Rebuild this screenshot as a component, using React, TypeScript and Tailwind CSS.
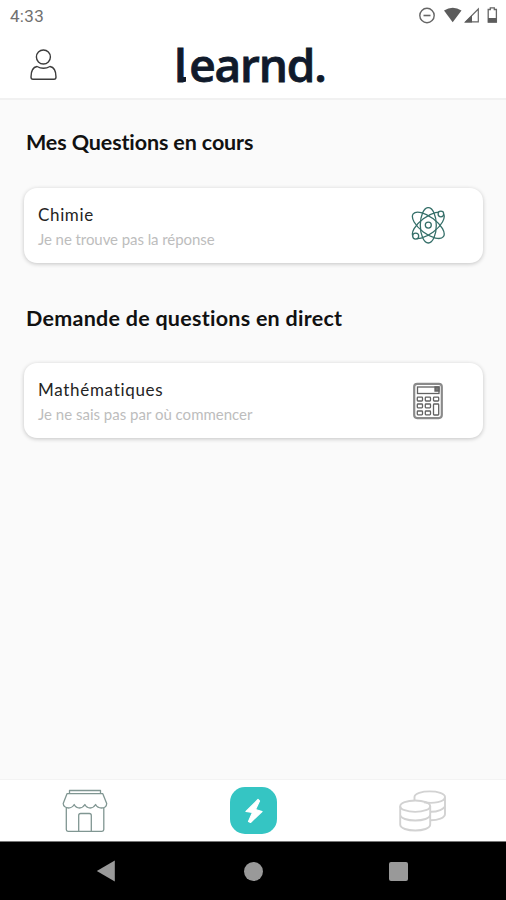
import React from 'react';

function StatusIcons() {
  return (
    <svg className="h-[20px] w-[82px]" viewBox="418 5 82 20" fill="none">
      <circle cx="427" cy="14.5" r="7.2" stroke="#666" strokeWidth="1.4" />
      <path d="M423.500 14.500h7" stroke="#666" strokeWidth="1.6" />
      <path d="M444 9.500Q452.700 4 461.500 9.500L452.700 21.300Z" fill="#5c5c5c" />
      <path d="M465.500 20.800L478.300 8V20.800Z" stroke="#666" strokeWidth="1.2" />
      <path d="M464.500 21.400L472 14V21.400Z" fill="#5c5c5c" />
      <path d="M488.200 8.500h2.100V6.800h4v1.700h2.100v12.700h-8.200Z" stroke="#666" strokeWidth="1.3" />
      <path d="M488 17h8.600v4.500H488Z" fill="#5c5c5c" />
    </svg>
  );
}

function UserIcon() {
  return (
    <svg className="h-[34px] w-[30px]" viewBox="28 48 30 34" fill="none" stroke="#3c3c3c" strokeWidth="1.4">
      <circle cx="43.400" cy="57" r="7" />
      <path d="M37 66.500Q43.500 70 50 66.500Q56 67.500 56 77Q56 79.200 54 79.200H33Q31 79.200 31 77Q31 67.500 37 66.500Z" strokeLinejoin="round" />
    </svg>
  );
}

function AtomIcon() {
  return (
    <svg className="h-[38px] w-[36px]" viewBox="410 206.500 36 38" fill="none" stroke="#356f69" strokeWidth="1.300">
      <ellipse cx="428.300" cy="224.800" rx="8" ry="17.700" />
      <ellipse cx="428.300" cy="224.800" rx="8.300" ry="18.900" transform="rotate(53 428.300 224.800)" />
      <ellipse cx="428.300" cy="224.800" rx="8.300" ry="18.900" transform="rotate(-53 428.300 224.800)" />
      <circle cx="428.300" cy="224.600" r="3" />
      <circle cx="440.900" cy="213.500" r="2.800" fill="white" />
      <circle cx="415.700" cy="235.600" r="3" fill="white" />
    </svg>
  );
}

function CalculatorIcon() {
  return (
    <svg className="h-[38px] w-[36px]" viewBox="410 381.500 36 38" fill="none" stroke="#626262" strokeWidth="1.300">
      <rect x="414.200" y="383.300" width="27.600" height="34.300" rx="3" stroke="#8a8a8a" strokeWidth="2.200" />
      <rect x="417.500" y="386.500" width="21.500" height="6.500" />
      <path d="M435 386.500v4h4v-4Z" fill="#777" />
      <rect x="417.300" y="396.700" width="5.200" height="3.800" rx=".7" />
      <rect x="425.300" y="396.700" width="5.200" height="3.800" rx=".7" />
      <rect x="433.500" y="396.700" width="5.200" height="3.800" rx=".7" />
      <rect x="417.300" y="403.500" width="5.200" height="3.800" rx=".7" />
      <rect x="425.300" y="403.500" width="5.200" height="3.800" rx=".7" />
      <rect x="417.300" y="410.500" width="5.200" height="3.800" rx=".7" />
      <rect x="425.300" y="410.500" width="5.200" height="3.800" rx=".7" />
      <rect x="433.500" y="403.500" width="5.200" height="11" rx=".7" />
    </svg>
  );
}

function StoreIcon() {
  return (
    <svg className="h-[46px] w-[48px]" viewBox="61 788 48 46" fill="none" stroke="#809692" strokeWidth="1.300" strokeLinejoin="round">
      <path d="M69.500 793.500V790.500H100.500V793.500M67 793.700H102.800L106.700 803.500Q106.500 808 101.500 808Q97.500 808 95.600 804.500Q93.500 808 90.200 808Q86.800 808 84.900 804.500Q82.800 808 79.500 808Q76 808 74.200 804.500Q72 808 68.500 808Q63.500 807.500 63.200 803.500Z" />
      <path d="M66.300 808V829.500Q66.300 831.300 68 831.300H102Q103.800 831.300 103.800 829.500V808" />
      <path d="M78.700 831V815.500Q78.700 813.500 80.700 813.500H89.300Q91.300 813.500 91.300 815.500V831" />
    </svg>
  );
}

function CoinsIcon() {
  return (
    <svg className="h-[44px] w-[50px]" viewBox="398 789 50 44" fill="none" stroke="#d2d2d2" strokeWidth="1.900">
      <path d="M414.500 800V797C414.500 789.500 445 789.500 445 797V814C445 818 437.500 820.200 431 820.200M424 802.200C433 804 445 802 445 797M430.500 811.800C437 812 445 809 445 805.500" />
      <ellipse cx="415.200" cy="806.200" rx="15" ry="5.700" />
      <path d="M400.200 806.200V824.500C400.200 832.500 430.200 832.500 430.200 824.500V806.200M400.200 814.500C400.200 822.500 430.200 822.500 430.200 814.500" />
    </svg>
  );
}

interface QuestionCardProps {
  title: React.ReactNode;
  subtitle: React.ReactNode;
  icon: React.ReactNode;
}

function QuestionCard({ title, subtitle, icon }: QuestionCardProps) {
  return (
    <article className="flex h-[75px] w-[459px] items-center justify-between rounded-[13px] bg-white pr-[37px] pl-[14px] shadow-[0_1px_4px_rgba(0,0,0,0.22)]">
      <div className="flex flex-col pt-[3px]">
        {title}
        {subtitle}
      </div>
      {icon}
    </article>
  );
}

export default function App() {
  return (
    <div className="flex h-[900px] w-[506px] flex-col overflow-hidden bg-[#fafafa] font-['Lato','Open_Sans',sans-serif] whitespace-nowrap [font-variant-ligatures:none]">
      <header className="h-[100px] shrink-0 border-b-2 border-[#f1f1f1] bg-white">
        <div className="flex h-[31px] items-center justify-between pr-[6px] pl-[10px]">
          <span className="font-['Roboto',sans-serif] text-[17px] leading-5 tracking-[0.3px] text-[#707070]">4:33</span>
          <StatusIcons />
        </div>
        <div className="grid h-[67px] grid-cols-[175px_1fr] items-center">
          <div className="pl-[28px]"><UserIcon /></div>
          <h1 className="-mt-[2px] -ml-px font-['Open_Sans',sans-serif] text-[46px] leading-[60px] font-semibold text-[#101a2b] [-webkit-text-stroke:0.8px_#101a2b]">
            <span className="relative tracking-[2.400px] after:absolute after:bottom-[13px] after:left-[5px] after:h-[5px] after:w-[7px] after:rounded-bl-[2px] after:rounded-br-[1px] after:bg-[#101a2b]">l</span><span className="tracking-[-1.200px]">earnd.</span>
          </h1>
        </div>
      </header>

      <main className="flex grow flex-col px-[24px]">
        <h2 className="mt-[27px] ml-[2px] h-[30px] text-[21.500px] leading-[30px] font-bold text-[#111]"><span className="tracking-[-0.12px]">Mes Questions en cours</span></h2>
        <div className="mt-[31px]">
          <QuestionCard
            title={<h3 className="h-[24px] text-[17px] leading-[24px] text-[#242424]"><span className="tracking-[0.65px]">Chimie</span></h3>}
            subtitle={<p className="h-[24px] text-[15px] leading-[24px] text-[#bdbdbd]"><span className="tracking-[-0.07px]">Je ne trouve pas la réponse</span></p>}
            icon={<AtomIcon />}
          />
        </div>
        <h2 className="mt-[40px] ml-[2px] h-[30px] text-[21.500px] leading-[30px] font-bold text-[#111]"><span className="tracking-[0.26px]">Demande de questions en direct</span></h2>
        <div className="mt-[30px]">
          <QuestionCard
            title={<h3 className="h-[24px] text-[17px] leading-[24px] text-[#242424]"><span className="tracking-[0.7px]">Mathématiques</span></h3>}
            subtitle={<p className="h-[24px] text-[15px] leading-[24px] text-[#bdbdbd]"><span className="tracking-[0px]">Je ne sais pas par où commencer</span></p>}
            icon={<CalculatorIcon />}
          />
        </div>
      </main>

      <nav className="flex h-[63px] shrink-0 items-center justify-between border-t border-b border-t-[#f3f3f3] border-b-[#777] bg-white pr-[58px] pl-[61px]">
        <StoreIcon />
        <div className="flex size-[47px] items-center justify-center rounded-[15px] bg-[#35c5c3]">
          <svg className="h-[28px] w-[22px]" viewBox="243 797 22 28" fill="white" stroke="white" strokeLinejoin="round" strokeWidth="1.200">
            <path d="M258 799.500L246 811.500L252.500 812.500L248.500 821.500L250.500 822.500L262 811.500L255.500 809.500L259.500 801Z" />
          </svg>
        </div>
        <CoinsIcon />
      </nav>
      <footer className="flex h-[58px] shrink-0 items-center bg-black">
        <svg className="ml-[96px] h-[22px] w-[20px]" viewBox="0 0 20 22"><path d="M.8 11L18.800 .5V21.500Z" fill="#999" /></svg>
        <div className="ml-[128px] size-[19px] rounded-full bg-[#999]" />
        <div className="ml-[126px] size-[19px] rounded-[2px] bg-[#999]" />
      </footer>
    </div>
  );
}
